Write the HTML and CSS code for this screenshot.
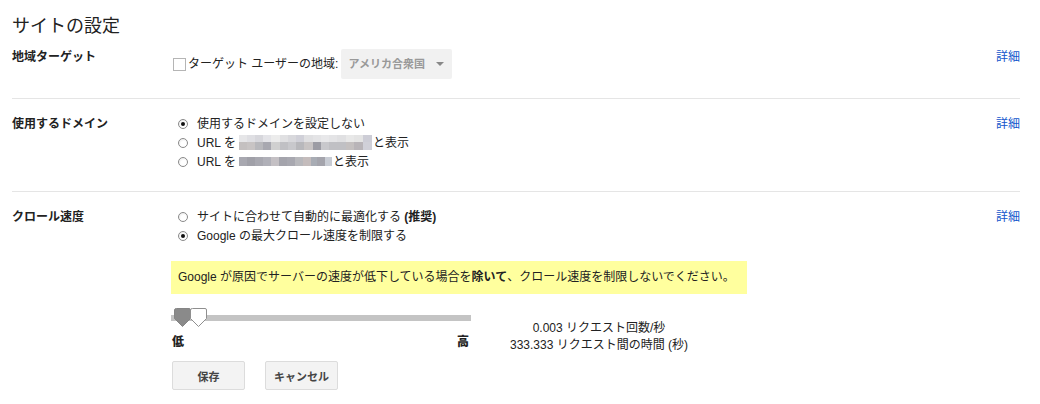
FILE: index.html
```html
<!DOCTYPE html>
<html lang="ja">
<head>
    <meta charset="UTF-8">
    <title>サイトの設定</title>
    <link rel="stylesheet" href="styles.css">
</head>
<body>

<h1 class="page-title">サイトの設定</h1>

<div class="setting first">
    <div class="setting-label">地域ターゲット</div>
    <div class="setting-body">
        <div class="geo-line">
            <span class="checkbox"></span>
            <span>ターゲット ユーザーの地域:</span>
            <span class="select">アメリカ合衆国<span class="caret"></span></span>
        </div>
    </div>
    <a class="more" href="#">詳細</a>
</div>

<div class="setting">
    <div class="setting-label">使用するドメイン</div>
    <div class="setting-body">
        <div class="option"><span class="radio checked"></span>使用するドメインを設定しない</div>
        <div class="option"><span class="radio"></span>URL を<span class="mosaic mosaic-a"></span>と表示</div>
        <div class="option"><span class="radio"></span>URL を<span class="mosaic mosaic-b"></span>と表示</div>
    </div>
    <a class="more" href="#">詳細</a>
</div>

<div class="setting last">
    <div class="setting-label">クロール速度</div>
    <div class="setting-body">
        <div class="option"><span class="radio"></span>サイトに合わせて自動的に最適化する <b>(推奨)</b></div>
        <div class="option"><span class="radio checked"></span>Google の最大クロール速度を制限する</div>

        <div class="notice">Google が原因でサーバーの速度が低下している場合を<b>除いて</b>、クロール速度を制限しないでください。</div>

        <div class="rate">
            <div class="rate-slider">
                <div class="track">
                    <svg class="thumb thumb-dark" width="18" height="20" viewBox="0 0 18 20">
                        <path d="M2.5 0.5 H15 Q16.5 0.5 16.5 2 V10.5 L8.5 18.5 L0.5 10.5 V2 Q0.5 0.5 2.5 0.5 Z" fill="#8a8a8a" stroke="#858585"/>
                    </svg>
                    <svg class="thumb thumb-light" width="18" height="20" viewBox="0 0 18 20">
                        <path d="M2.5 0.5 H15 Q16.5 0.5 16.5 2 V10.5 L8.5 18.5 L0.5 10.5 V2 Q0.5 0.5 2.5 0.5 Z" fill="#fff" stroke="#8f8f8f"/>
                    </svg>
                </div>
                <div class="rate-ends"><b>低</b><b>高</b></div>
            </div>
            <div class="rate-info">
                <div>0.003 リクエスト回数/秒</div>
                <div>333.333 リクエスト間の時間 (秒)</div>
            </div>
        </div>

        <div class="actions">
            <button class="btn">保存</button>
            <button class="btn">キャンセル</button>
        </div>
    </div>
    <a class="more" href="#">詳細</a>
</div>

</body>
</html>
```

FILE: styles.css
```css
body {
    margin: 0;
    padding: 0 20px 0 12px;
    font-family: "Liberation Sans", Arial, "Noto Sans CJK JP", sans-serif;
    font-size: 12px;
    line-height: 19px;
    color: #222;
    background: #fff;
}
.page-title {
    margin: 0;
    padding-top: 17px;
    font-size: 18px;
    line-height: 18px;
    font-weight: normal;
    color: #222;
}
.setting {
    display: flex;
    padding: 14px 0 19px;
    border-bottom: 1px solid #e5e5e5;
}
.setting.first {
    padding-top: 11px;
}
.setting.last {
    border-bottom: none;
}
.setting-label {
    width: 160px;
    font-weight: bold;
    flex-shrink: 0;
    padding-top: 2px;
}
.setting-body {
    flex: 1;
    padding-top: 2px;
}
.more {
    color: #15c;
    text-decoration: none;
    padding-top: 2px;
}
.geo-line {
    display: flex;
    align-items: center;
    margin-top: 1px;
}
.checkbox {
    width: 11px;
    height: 11px;
    border: 1px solid #b5b5b5;
    background: #fff;
    margin: 0 2px 0 1px;
}
.select {
    display: inline-flex;
    align-items: center;
    width: 104px;
    height: 30px;
    padding-left: 7px;
    margin-left: 3px;
    background: #f1f1f1;
    border-radius: 2px;
    color: #999;
    font-size: 11px;
    font-weight: bold;
}
.caret {
    margin-left: auto;
    margin-right: 8px;
    border-left: 4px solid transparent;
    border-right: 4px solid transparent;
    border-top: 4px solid #888;
}
.radio {
    display: inline-block;
    vertical-align: -1px;
    width: 8px;
    height: 8px;
    border: 1px solid #8a8a8a;
    border-radius: 50%;
    margin: 0 9px 0 6px;
    background: radial-gradient(circle at 60% 65%, #fff 40%, #e2e2e2 100%);
    position: relative;
}
.radio.checked::after {
    content: "";
    position: absolute;
    left: 2px;
    top: 2px;
    width: 4px;
    height: 4px;
    border-radius: 50%;
    background: #111;
}
.mosaic {
    display: inline-block;
    vertical-align: -3px;
    height: 15px;
    margin: 0 1px 0 3px;
}
.mosaic-a {
    width: 133px;
    background:
        linear-gradient(to right, #e6e6e8 0 8px, #dfdfe3 8px 16px, #d7d7dc 16px 24px, #e4e4e8 24px 32px, #ececec 32px 41px, #e0e0e2 41px 49px, #d8d8dc 49px 57px, #d0d0d8 57px 65px, #e0e0e2 65px 74px, #e4e4e6 74px 82px, #e8e8ea 82px 90px, #e4e4e6 90px 98px, #e0e0e2 98px 107px, #e8e8e8 107px 115px, #e4e4e4 115px 124px, #cdcdd6 124px) top / 100% 7px no-repeat,
        linear-gradient(to right, #c4c0c0 0 8px, #c8c4c4 8px 16px, #b8b8bc 16px 24px, #a8a8b0 24px 32px, #d0d0d0 32px 41px, #c0c0c4 41px 49px, #c8c8cc 49px 57px, #b8b8bc 57px 65px, #c8c4c4 65px 74px, #9c9ca4 74px 82px, #c8c8cc 82px 90px, #c0c0c4 90px 98px, #c0c0c4 98px 107px, #c4c0c0 107px 115px, #b8b4b8 115px 124px, #d0d0d8 124px) bottom / 100% 8px no-repeat;
}
.mosaic-b {
    width: 93px;
    background: linear-gradient(to right, #a8a8b0 0 8px, #a0a0a8 8px 16px, #a8a8b0 16px 24px, #b0b0b8 24px 32px, #c4c0c4 32px 40px, #a4a4ac 40px 48px, #a8a8b0 48px 56px, #b8b8bc 56px 64px, #c4bcbc 64px 72px, #a8acb4 72px 78px, #a4a4ac 78px 86px, #c8ccd4 86px) center / 100% 9px no-repeat;
}
.notice {
    margin: 15px 0 0 -1px;
    width: 562px;
    padding: 7px 7px;
    background: #ffff9e;
}
.rate {
    display: flex;
    margin-top: 15px;
}
.rate-slider {
    width: 299px;
}
.track {
    position: relative;
    height: 19px;
    margin-left: -1px;
    background: linear-gradient(#c4c4c4, #c4c4c4) 0 6px / 100% 6px no-repeat;
}
.thumb {
    position: absolute;
    top: -1px;
}
.thumb-dark {
    left: 3px;
}
.thumb-light {
    left: 19px;
}
.rate-ends {
    display: flex;
    justify-content: space-between;
    margin-top: 5px;
    font-weight: bold;
    padding-right: 2px;
}
.rate-info {
    width: 256px;
    text-align: center;
    padding-top: 11px;
    line-height: 17px;
}
.actions {
    display: flex;
    gap: 20px;
    margin-top: 7px;
}
.btn {
    min-width: 73px;
    height: 29px;
    padding: 0 8px;
    background: #f3f3f3;
    border: 1px solid #dcdcdc;
    border-radius: 2px;
    font-family: inherit;
    font-size: 11px;
    font-weight: bold;
    color: #444;
}
```
